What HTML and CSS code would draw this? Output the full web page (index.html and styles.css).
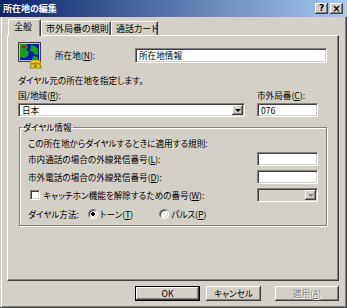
FILE: index.html
```html
<!DOCTYPE html>
<html lang="ja">
<head>
  <meta charset="UTF-8" />
  <title>所在地の編集</title>
  <link rel="stylesheet" href="styles.css">
</head>
<body>
  <div class="window">
    <div class="titlebar">
      <span class="title">所在地の編集</span>
      <div class="title-buttons">
        <span class="tbtn">?</span>
        <span class="tbtn close">×</span>
      </div>
    </div>

    <div class="tabs">
      <div class="tab active">全般</div>
      <div class="tab">市外局番の規則</div>
      <div class="tab">通話カード</div>
    </div>

    <div class="panel">
      <div class="profile">
        <svg class="loc-icon" width="24" height="27" viewBox="0 0 24 27">
          <rect x="0.5" y="0.5" width="22" height="19" fill="#c0c0c0" stroke="#404040" />
          <rect x="2" y="2" width="19" height="16" fill="#0018b8" />
          <path d="M2 2h6l2 3-2 3 3 2-1 4-4 2-4-1z" fill="#18a018" />
          <path d="M13 3l4 1 3 3v5l-3 1-2-3-3-1z" fill="#18a018" />
          <path d="M15 14l5 1v3h-6z" fill="#18a018" />
          <circle cx="6" cy="5" r="1.8" fill="#e00000" />
          <path d="M12 20c1-3 9-3 11 0l-1 2h-2l-1-1h-3l-1 1h-2z" fill="#f0d000" stroke="#806000" stroke-width="0.7" />
          <path d="M13 22h9l1 4h-11z" fill="#f0d000" stroke="#806000" stroke-width="0.7" />
          <circle cx="17.5" cy="24" r="1.2" fill="#806000" />
        </svg>
        <span class="profile-label">所在地(<u>N</u>):</span>
        <div class="field wide">所在地情報</div>
      </div>

      <div class="desc">ダイヤル元の所在地を指定します。</div>

      <div class="region-grid">
        <span class="line">国/地域(<u>R</u>):</span>
        <span class="line">市外局番(<u>C</u>):</span>
        <div class="field combo">
          <span class="combo-text">日本</span>
          <span class="drop"><span class="arrow"></span></span>
        </div>
        <div class="field short">076</div>
      </div>

      <fieldset class="group">
        <legend>ダイヤル情報</legend>
        <div class="line">この所在地からダイヤルするときに適用する規則:</div>
        <div class="row r2">
          <span>市内通話の場合の外線発信番号(<u>L</u>):</span>
          <div class="field short"></div>
        </div>
        <div class="row r3">
          <span>市外電話の場合の外線発信番号(<u>D</u>):</span>
          <div class="field short"></div>
        </div>
        <div class="row r3">
          <span class="check-wrap"><span class="checkbox"></span>キャッチホン機能を解除するための番号(<u>W</u>):</span>
          <div class="field short combo disabled">
            <span class="combo-text"></span>
            <span class="drop"><span class="arrow"></span></span>
          </div>
        </div>
        <div class="dial-row">
          <span class="dial-label">ダイヤル方法:</span>
          <span class="radio-wrap"><span class="radio on"></span>トーン(<u>T</u>)</span>
          <span class="radio-wrap second"><span class="radio"></span>パルス(<u>P</u>)</span>
        </div>
      </fieldset>
    </div>

    <div class="actions">
      <button class="btn ok">OK</button>
      <button class="btn cancel">キャンセル</button>
      <button class="btn apply" disabled>適用(<u>A</u>)</button>
    </div>
  </div>
</body>
</html>
```

FILE: styles.css
```css
body {
  margin: 0;
  padding: 0;
  background-color: #d4d0c8;
  font-family: "Noto Sans CJK JP", "Noto Sans", sans-serif;
  font-size: 8.6px;
  font-feature-settings: "palt";
  color: #000;
}

u {
  text-decoration: underline;
}

.window {
  width: 347px;
  height: 308px;
  box-sizing: border-box;
  padding: 0 2px 2px 2px;
  background-color: #d4d0c8;
  box-shadow: inset -1px -1px #404040, inset 1px 0 #d4d0c8, inset 2px 0 #ffffff, inset -2px -2px #808080;
  display: flex;
  flex-direction: column;
}

.titlebar {
  height: 17px;
  margin: 0 -2px;
  padding: 0 4px 0 3px;
  background: linear-gradient(to right, #0a246a, #a6caf0);
  display: flex;
  align-items: center;
  justify-content: space-between;
}

.title {
  color: #ffffff;
  font-weight: bold;
  font-size: 9px;
  line-height: 12px;
}

.title-buttons {
  display: flex;
  gap: 2px;
}

.tbtn {
  width: 13px;
  height: 11px;
  box-sizing: border-box;
  background-color: #d4d0c8;
  box-shadow: inset -1px -1px #404040, inset 1px 1px #ffffff, inset -2px -2px #808080;
  font-family: "DejaVu Sans", sans-serif;
  font-weight: bold;
  font-size: 9px;
  line-height: 11px;
  text-align: center;
}

.tbtn.close {
  font-size: 10px;
}

.tabs {
  display: flex;
  align-items: flex-end;
  height: 16px;
  margin-top: 2px;
  padding-left: 6px;
  font-size: 9px;
}

.tab {
  height: 14px;
  box-sizing: border-box;
  padding: 0 3px 0 5px;
  border-top: 1px solid #ffffff;
  border-left: 1px solid #ffffff;
  border-right: 1px solid #404040;
  border-radius: 2px 2px 0 0;
  box-shadow: inset -1px 0 #808080;
  line-height: 13px;
  white-space: nowrap;
}

.tab.active {
  height: 17px;
  width: 33px;
  padding-left: 5px;
  margin-bottom: -1px;
  position: relative;
  z-index: 1;
  background-color: #d4d0c8;
  line-height: 13px;
}

.tab:nth-child(2) {
  width: 70px;
  padding-left: 4px;
}

.tab:nth-child(3) {
  width: 47px;
  padding-left: 4px;
}

.panel {
  height: 246px;
  box-sizing: border-box;
  margin: 0 6px 0 5px;
  padding: 6px 11px 0 10px;
  border-top: 1px solid #ffffff;
  border-left: 1px solid #ffffff;
  border-right: 1px solid #404040;
  border-bottom: 1px solid #404040;
  box-shadow: inset -1px -1px #808080;
}

.profile {
  display: flex;
  align-items: center;
  height: 26px;
}

.loc-icon {
  flex: none;
}

.profile-label {
  width: 80px;
  margin-left: 13px;
}

.field {
  height: 14px;
  box-sizing: border-box;
  padding: 0 3px;
  background-color: #ffffff;
  border-top: 1px solid #808080;
  border-left: 1px solid #808080;
  border-right: 1px solid #ffffff;
  border-bottom: 1px solid #ffffff;
  box-shadow: inset 1px 1px #404040, inset -1px -1px #d4d0c8;
  line-height: 12px;
  white-space: nowrap;
}

.field.wide {
  flex: 1;
  height: 15px;
  line-height: 13px;
}

.field.short {
  width: 61px;
}

.desc {
  margin-top: 6px;
  line-height: 12px;
}

.line {
  line-height: 12px;
}

.region-grid {
  display: grid;
  grid-template-columns: 227px 1fr;
  column-gap: 12px;
  row-gap: 2px;
  margin-top: 3px;
}

.combo {
  display: flex;
  align-items: stretch;
  padding: 1px 1px 1px 3px;
}

.combo-text {
  flex: 1;
  line-height: 10px;
}

.drop {
  width: 11px;
  background-color: #d4d0c8;
  box-shadow: inset -1px -1px #404040, inset 1px 1px #ffffff, inset -2px -2px #808080;
  display: flex;
  align-items: center;
  justify-content: center;
}

.arrow {
  width: 0;
  height: 0;
  border-left: 3px solid transparent;
  border-right: 3px solid transparent;
  border-top: 3px solid #000000;
}

.combo.disabled {
  background-color: #d4d0c8;
}

.combo.disabled .arrow {
  border-top-color: #808080;
}

.group {
  margin: 4px 0 0 1px;
  padding: 0 8px 5px 8px;
  border: 1px solid #808080;
  box-shadow: inset 1px 1px #ffffff, 1px 1px #ffffff;
}

.group legend {
  margin-left: -6px;
  padding: 0 1px;
  line-height: 12px;
}

.group .line {
  margin-top: 4px;
}

.row {
  display: flex;
  justify-content: space-between;
  align-items: center;
  margin-top: 3px;
  height: 14px;
}

.row.r3 {
  margin-top: 4px;
}

.check-wrap {
  display: flex;
  align-items: center;
  margin-left: 2px;
}

.checkbox {
  width: 10px;
  height: 10px;
  box-sizing: border-box;
  margin-right: 3px;
  background-color: #ffffff;
  border-top: 1px solid #808080;
  border-left: 1px solid #808080;
  border-right: 1px solid #ffffff;
  border-bottom: 1px solid #ffffff;
  box-shadow: inset 1px 1px #404040, inset -1px -1px #d4d0c8;
}

.dial-row {
  display: flex;
  align-items: center;
  margin-top: 6px;
  height: 12px;
}

.dial-label {
  width: 60px;
}

.radio-wrap {
  display: flex;
  align-items: center;
}

.radio-wrap.second {
  margin-left: 26px;
}

.radio {
  width: 10px;
  height: 10px;
  box-sizing: border-box;
  margin-right: 2px;
  border-radius: 50%;
  background-color: #ffffff;
  border-top: 1px solid #808080;
  border-left: 1px solid #808080;
  border-right: 1px solid #ffffff;
  border-bottom: 1px solid #ffffff;
  box-shadow: inset 1px 1px #404040, inset -1px -1px #d4d0c8;
}

.radio.on {
  background: radial-gradient(circle, #000000 0 1.6px, #ffffff 2px);
}

.actions {
  display: flex;
  margin-top: 5px;
  padding-left: 133px;
}

.btn {
  height: 15px;
  box-sizing: border-box;
  padding: 0;
  border: none;
  background-color: #d4d0c8;
  box-shadow: inset -1px -1px #404040, inset 1px 1px #ffffff, inset -2px -2px #808080;
  font-family: "Noto Sans CJK JP", "Noto Sans", sans-serif;
  font-size: 8.6px;
  font-feature-settings: "palt";
  line-height: 13px;
  color: #000;
}

.btn.ok {
  width: 65px;
  border: 1px solid #000000;
}

.btn.cancel {
  width: 55px;
  margin-left: 6px;
}

.btn.apply {
  width: 64px;
  margin-left: 14px;
  color: #808080;
  text-shadow: 1px 1px #ffffff;
}
```
